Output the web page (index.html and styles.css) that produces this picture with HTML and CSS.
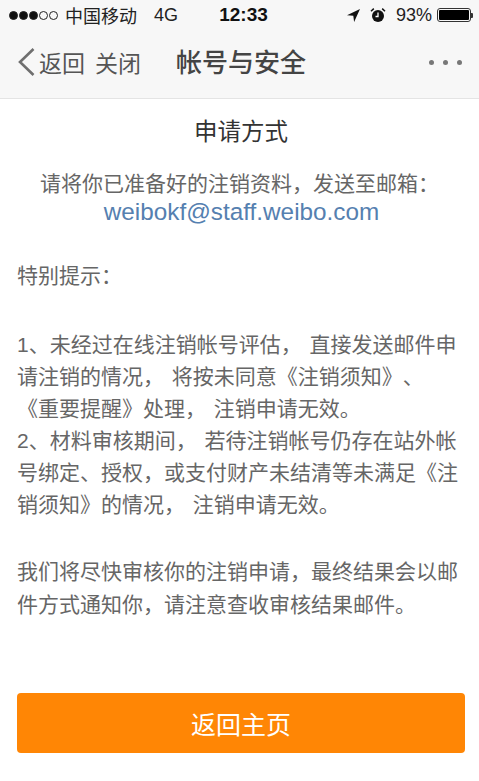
FILE: index.html
```html
<!DOCTYPE html>
<html lang="zh-CN">
<head>
<meta charset="utf-8">
<title>帐号与安全</title>
<link rel="stylesheet" href="styles.css">
</head>
<body>
<div class="screen">
  <header class="top">
    <div class="status">
      <div class="status-left">
        <span class="signal"><i class="on"></i><i class="on"></i><i class="on"></i><i></i><i></i></span>
        <span class="carrier">中国移动</span>
        <span class="net">4G</span>
      </div>
      <div class="clock">12:33</div>
      <div class="status-right">
        <svg class="loc" width="15" height="15" viewBox="0 0 15 15"><path d="M14 1 1 7.2l6.3.6.8 6.2z" fill="#111"/></svg>
        <svg class="alarm" width="16" height="16" viewBox="0 0 16 16"><circle cx="8" cy="9" r="6" fill="#111"/><path d="M8 5.5V9.5H5.5" fill="none" stroke="#fff" stroke-width="1.3"/><path d="M1 4.2 3.8 1.6M15 4.2 12.2 1.6" stroke="#111" stroke-width="1.5"/></svg>
        <span class="pct">93%</span>
        <span class="battery"><span class="fill"></span></span><span class="nub"></span>
      </div>
    </div>
    <nav class="nav">
      <svg class="back" width="19" height="30" viewBox="0 0 19 30"><path d="M16.5 2 3 15l13.5 13" fill="none" stroke="#6f6f6f" stroke-width="2.6"/></svg>
      <span class="nav-link">返回</span>
      <span class="nav-link close">关闭</span>
      <span class="nav-title">帐号与安全</span>
      <span class="dots"><i></i><i></i><i></i></span>
    </nav>
  </header>
  <main class="content">
    <h1 class="heading">申请方式</h1>
    <p class="intro">请将你已准备好的注销资料，发送至邮箱：<br><a class="mail">weibokf@staff.weibo.com</a></p>
    <p class="para tip">特别提示：</p>
    <p class="para notes">1、未经过在线注销帐号评估， 直接发送邮件申<br>请注销的情况， 将按未同意《注销须知》、<br>《重要提醒》处理， 注销申请无效。<br>2、材料审核期间， 若待注销帐号仍存在站外帐<br>号绑定、授权，或支付财产未结清等未满足《注<br>销须知》的情况， 注销申请无效。</p>
    <p class="para final">我们将尽快审核你的注销申请，最终结果会以邮<br>件方式通知你，请注意查收审核结果邮件。</p>
    <button class="home">返回主页</button>
  </main>
</div>
</body>
</html>
```
FILE: styles.css
```css
* { box-sizing: border-box; }
html, body { margin: 0; padding: 0; }
body {
  width: 479px;
  height: 781px;
  overflow: hidden;
  background: #fff;
  font-family: "Liberation Sans", "Noto Sans CJK SC", sans-serif;
  text-spacing-trim: space-all;
}
.screen { width: 479px; height: 781px; display: flex; flex-direction: column; }
.top { height: 99px; background: #f7f7f7; border-bottom: 1px solid #e4e4e4; flex: none; }
.status { height: 30px; display: grid; grid-template-columns: 1fr auto 1fr; align-items: center; padding: 0 6px 0 9px; color: #111; }
.status-left { display: flex; align-items: center; }
.signal { display: flex; gap: 1px; }
.signal i { width: 9px; height: 9px; border-radius: 50%; border: 1px solid #222; }
.signal i.on { background: #111; }
.carrier { font-size: 18px; margin-left: 7px; color: #222; }
.net { font-size: 18px; margin-left: 17px; color: #222; }
.clock { font-size: 19px; font-weight: bold; color: #111; margin-left: 5px; }
.status-right { display: flex; align-items: center; justify-content: flex-end; }
.alarm { margin-left: 9px; }
.pct { font-size: 18px; margin-left: 10px; color: #222; }
.battery { width: 34px; height: 14px; margin-left: 5px; border: 1px solid #333; border-radius: 3px; padding: 1px; display: flex; }
.fill { flex: 1; background: #000; border-radius: 1px; }
.nub { width: 2px; height: 5px; background: #333; border-radius: 0 1px 1px 0; }
.nav { height: 68px; padding: 0 0 4px 17px; display: flex; align-items: center; }
.nav-link { font-size: 23px; color: #555; }
.back { margin-right: 3px; }
.close { margin-left: 10px; }
.nav-title { font-size: 26px; font-weight: 500; color: #444; margin-left: 35px; padding-bottom: 3px; }
.dots { margin-left: auto; margin-right: 17px; display: flex; gap: 9px; }
.dots i { width: 5px; height: 5px; border-radius: 50%; background: #777; }
.content { flex: 1; padding: 0 17px; display: flex; flex-direction: column; }
.heading { margin: 16px 0 0; padding-left: 3px; font-size: 23.5px; line-height: 34px; font-weight: normal; text-align: center; color: #333; }
.intro { margin: 21px 0 0; font-size: 21px; line-height: 28px; text-align: center; color: #666; }
.mail { color: #5580b0; font-size: 24.3px; margin-left: 4px; }
.para { margin: 0; font-size: 21px; line-height: 32px; color: #666; word-spacing: 2px; }
.tip { margin-top: 33px; }
.notes { margin-top: 37px; }
.final { margin-top: 34px; line-height: 33px; }
.home { margin-top: auto; margin-bottom: 28px; height: 60px; flex: none; width: 448px; border: 0; border-radius: 4px; background: #ff8605; color: #fff; font-family: inherit; font-size: 25px; }
```
